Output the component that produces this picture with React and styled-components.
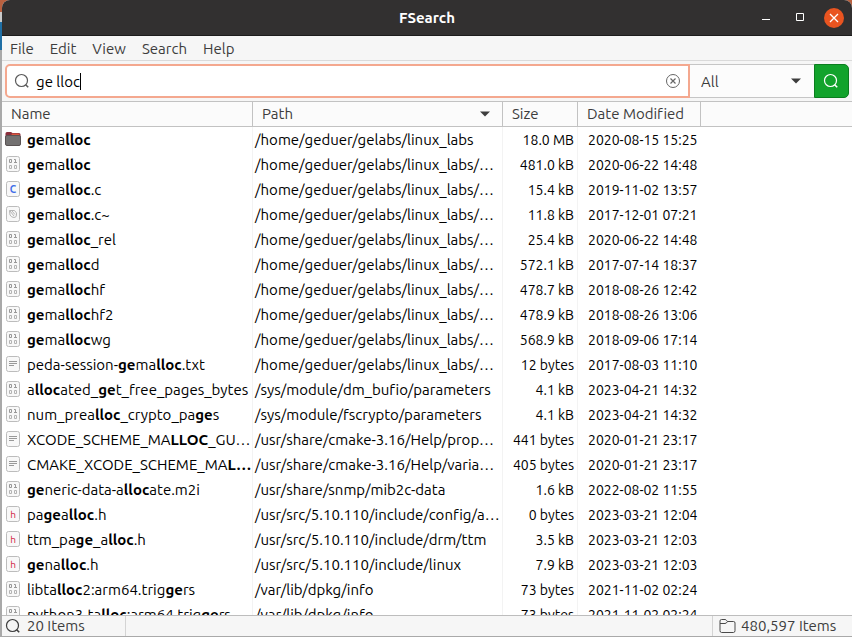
import React, { useState } from "react";
import styled, { createGlobalStyle } from "styled-components";

const GlobalStyle = createGlobalStyle`
  * {
    box-sizing: border-box;
  }
  body {
    margin: 0;
    color: #3d3d3d;
    font-family: Ubuntu, "Noto Sans", sans-serif;
    font-size: 15px;
    font-variant-ligatures: none;
  }
  button, input, select {
    font: inherit;
    color: inherit;
  }
`;

const Desktop = styled.div`
  height: 100vh;
  padding: 0 0 1px 2px;
  background: linear-gradient(
    #b9603f 0 12px,
    #c9c9c9 12px 22px,
    #1f6fa5 22px 50px,
    #a9a9a9 50px
  );
`;

const Window = styled.div`
  height: 100%;
  display: flex;
  flex-direction: column;
  overflow: hidden;
  border-radius: 8px 8px 0 0;
  background: #f6f6f6;
`;

const TitleBar = styled.header`
  display: grid;
  grid-template-columns: 1fr auto 1fr;
  align-items: center;
  flex: none;
  height: 36px;
  padding: 0 8px;
  background: #323030;
  border-bottom: 1px solid #1d1c1c;
  color: #fff;
`;

const Title = styled.h1`
  grid-column: 2;
  margin: 0;
  font-size: 15px;
  font-weight: 700;
`;

const WindowButtons = styled.div`
  display: flex;
  justify-content: flex-end;
  gap: 14px;
`;

const WindowButton = styled.button`
  width: 20px;
  height: 20px;
  padding: 0;
  border: 0;
  border-radius: 50%;
  background: ${(props) => (props.$close ? "#e95420" : "transparent")};
  color: #fff;

  svg {
    display: block;
  }
`;

const MenuBar = styled.nav`
  display: flex;
  align-items: center;
  flex: none;
  gap: 16px;
  height: 25px;
  padding: 2px 8px 0;
  border-bottom: 1px solid #dadada;
`;

const MenuItem = styled.button`
  padding: 0;
  border: 0;
  background: none;
  line-height: 20px;
`;

const SearchBar = styled.form`
  display: flex;
  flex: none;
  height: 40px;
  padding: 3px;
`;

const SearchField = styled.label`
  display: flex;
  align-items: center;
  flex: 1;
  min-width: 0;
  padding: 0 7px;
  background: #fff;
  border: 2px solid #f4a88f;
  border-radius: 5px 0 0 5px;
  color: #000;
`;

const SearchInput = styled.input`
  field-sizing: content;
  height: 20px;
  margin-left: 6px;
  padding: 0;
  border: 0;
  outline: 0;
  background: none;
  caret-color: transparent;
  line-height: 18px;
`;

const Cursor = styled.span`
  width: 1px;
  height: 17px;
  background: #000;
`;

const ClearButton = styled.button`
  margin-left: auto;
  padding: 0;
  border: 0;
  background: none;

  svg {
    display: block;
  }
`;

const Filter = styled.div`
  display: grid;
  align-items: center;
  width: 124px;
  background: #fcfcfc;
  border: solid #c6c6c6;
  border-width: 1px 0;

  > * {
    grid-area: 1 / 1;
  }

  svg {
    justify-self: end;
    margin-right: 13px;
    pointer-events: none;
  }
`;

const FilterSelect = styled.select`
  appearance: none;
  width: 100%;
  height: 100%;
  padding: 0 11px;
  border: 0;
  outline: 0;
  background: none;
`;

const SearchButton = styled.button`
  display: flex;
  align-items: center;
  width: 35px;
  padding: 0 8px;
  background: #12a32c;
  border: 1px solid #0b7d1f;
  border-radius: 0 5px 5px 0;
  color: #fff;
`;

const Results = styled.main`
  flex: 1;
  min-height: 0;
  overflow: hidden;
  background: #fff;
  border-top: 1px solid #c2c2c2;
`;

const Table = styled.table`
  width: 100%;
  table-layout: fixed;
  border-collapse: separate;
  border-spacing: 0;
`;

const Col = styled.col`
  width: ${(props) => props.$width};
`;

const HeadCell = styled.th`
  height: 25px;
  padding: 0 9px;
  background: #fbfbfb;
  border-bottom: 1px solid #c2c2c2;
  border-right: 1px solid #c2c2c2;
  font-weight: 400;
  line-height: 20px;
  text-align: left;

  &:last-child {
    border-right: 0;
  }
`;

const HeadLabel = styled.div`
  display: flex;
  align-items: center;
  justify-content: space-between;
  padding-right: 3px;
`;

const Cell = styled.td`
  height: 25px;
  padding: 0 ${(props) => props.$right || "2px"} 0 ${(props) => props.$left || "2px"};
  overflow: hidden;
  border-right: 1px solid #f3f3f3;
  color: #000;
  font-size: ${(props) => (props.$small ? "14px" : "15px")};
  line-height: 20px;
  text-align: ${(props) => props.$align || "left"};
  white-space: nowrap;

  &:nth-last-child(-n + 2) {
    border-right: 0;
  }
`;

const FileName = styled.div`
  display: flex;
  align-items: center;
  gap: 6px;

  svg {
    flex: none;
    margin-bottom: 2px;
  }
`;

const Match = styled.b`
  font-weight: 700;
`;

const StatusBar = styled.footer`
  display: flex;
  justify-content: space-between;
  flex: none;
  height: 21px;
  border-top: 1px solid #bdbdbd;
`;

const Status = styled.div`
  display: flex;
  align-items: center;
  gap: ${(props) => (props.$right ? "5px" : "6px")};
  width: ${(props) => (props.$right ? "140px" : "124px")};
  padding-left: ${(props) => (props.$right ? "6px" : "3px")};
  border: solid #d4d4d4;
  border-width: ${(props) => (props.$right ? "0 0 0 1px" : "0 1px 0 0")};
  line-height: 20px;
`;

const SearchIcon = ({ color = "#5a5a5a" }) => (
  <svg width="16" height="16" viewBox="0 0 16 16" fill="none" stroke={color}>
    <circle cx="7.5" cy="7.5" r="6" strokeWidth="1.2" />
    <path d="M11.7 11.7 14.2 14.2" strokeWidth="1.6" />
  </svg>
);

const ClearIcon = () => (
  <svg width="16" height="16" viewBox="0 0 16 16" fill="none" stroke="#666">
    <circle cx="8" cy="8" r="6.5" />
    <path d="M5.5 5.5 10.5 10.5M10.5 5.5 5.5 10.5" strokeWidth="1.2" />
  </svg>
);

const ArrowIcon = () => (
  <svg width="10" height="6" viewBox="0 0 10 6" fill="#3d3d3d">
    <path d="M0 .5H10L5 5.5Z" />
  </svg>
);

const FolderOutlineIcon = () => (
  <svg width="17" height="16" viewBox="0 0 17 16" fill="none" stroke="#4a4a4a">
    <path d="M1 12.5V3Q1 1.5 2.5 1.5H6Q7 1.5 7.5 2.5T9 3.5H14.5Q16 3.5 16 5V12.5Q16 14.5 14.5 14.5H2.5Q1 14.5 1 12.5Z" />
    <path d="M1 5.5H6Q7.5 5.5 8.5 3.5" />
  </svg>
);

const glyphs = {
  binary: (
    <g fill="none" stroke="#999">
      <path d="M4.5 3.5h2v3h-2zM9 3.5h1.500v3M9 6.5h3" />
      <path d="M4.5 9.5h2v3h-2zM9.5 9.5h2v3h-2z" stroke="#b4b4b4" />
    </g>
  ),
  c: (
    <text x="8" y="12" textAnchor="middle" fontSize="10" fontWeight="700" fill="#3f6ee8">
      C
    </text>
  ),
  h: (
    <text x="8" y="12" textAnchor="middle" fontSize="10" fill="#d01c3c">
      h
    </text>
  ),
  text: <path d="M4 5.5H12M4 7.5H12M4 9.5H9" stroke="#999" />,
  backup: (
    <g fill="none" stroke="#b5b5b5">
      <path d="M4.5 4.5H9.5L11.5 7V9Q11.500 11.5 9 11.5T5 9Z" />
      <path d="M5 5 9 10M7 5 10 8.5" />
    </g>
  ),
};

const FileIcon = ({ type }) => {
  if (type === "folder") {
    return (
      <svg width="16" height="16" viewBox="0 0 16 16">
        <path d="M.5 12V2.5Q.5 1 2 1H6L7.5 2H14Q15.5 2 15.5 3.5V12Z" fill="#8c2f3c" />
        <path d="M7 2.5H13.5Q14.500 2.5 14.5 4V5H6Z" fill="#d8573f" />
        <rect x=".5" y="4.5" width="15" height="10" rx="1.5" fill="#737171" stroke="#5a5353" />
      </svg>
    );
  }
  return (
    <svg width="16" height="16" viewBox="0 0 16 16">
      <rect x="1.5" y=".5" width="13" height="15" rx="2" fill="#f8f8f8" stroke="#bcbcbc" />
      {glyphs[type]}
    </svg>
  );
};

// parts of a name between asterisks are the matched ones
const files = [
  ["folder", "*ge*ma*lloc*", "/home/geduer/gelabs/linux_labs", "18.0 MB", "2020-08-15 15:25"],
  ["binary", "*ge*ma*lloc*", "/home/geduer/gelabs/linux_labs/…", "481.0 kB", "2020-06-22 14:48"],
  ["c", "*ge*ma*lloc*.c", "/home/geduer/gelabs/linux_labs/…", "15.4 kB", "2019-11-02 13:57"],
  ["backup", "*ge*ma*lloc*.c~", "/home/geduer/gelabs/linux_labs/…", "11.8 kB", "2017-12-01 07:21"],
  ["binary", "*ge*ma*lloc*_rel", "/home/geduer/gelabs/linux_labs/…", "25.4 kB", "2020-06-22 14:48"],
  ["binary", "*ge*ma*lloc*d", "/home/geduer/gelabs/linux_labs/…", "572.1 kB", "2017-07-14 18:37"],
  ["binary", "*ge*ma*lloc*hf", "/home/geduer/gelabs/linux_labs/…", "478.7 kB", "2018-08-26 12:42"],
  ["binary", "*ge*ma*lloc*hf2", "/home/geduer/gelabs/linux_labs/…", "478.9 kB", "2018-08-26 13:06"],
  ["binary", "*ge*ma*lloc*wg", "/home/geduer/gelabs/linux_labs/…", "568.9 kB", "2018-09-06 17:14"],
  ["text", "peda-session-*ge*ma*lloc*.txt", "/home/geduer/gelabs/linux_labs/…", "12 bytes", "2017-08-03 11:10"],
  ["binary", "a*lloc*ated_*ge*t_free_pages_bytes", "/sys/module/dm_bufio/parameters", "4.1 kB", "2023-04-21 14:32"],
  ["binary", "num_prea*lloc*_crypto_pa*ge*s", "/sys/module/fscrypto/parameters", "4.1 kB", "2023-04-21 14:32"],
  ["text", "XCODE_SCHEME_MA*LLOC*_GU…", "/usr/share/cmake-3.16/Help/prop…", "441 bytes", "2020-01-21 23:17"],
  ["text", "CMAKE_XCODE_SCHEME_MA*L…*", "/usr/share/cmake-3.16/Help/varia…", "405 bytes", "2020-01-21 23:17"],
  ["binary", "*ge*neric-data-a*lloc*ate.m2i", "/usr/share/snmp/mib2c-data", "1.6 kB", "2022-08-02 11:55"],
  ["h", "pa*ge*a*lloc*.h", "/usr/src/5.10.110/include/config/a…", "0 bytes", "2023-03-21 12:04"],
  ["h", "ttm_pa*ge*_a*lloc*.h", "/usr/src/5.10.110/include/drm/ttm", "3.5 kB", "2023-03-21 12:03"],
  ["h", "*ge*na*lloc*.h", "/usr/src/5.10.110/include/linux", "7.9 kB", "2023-03-21 12:03"],
  ["binary", "libta*lloc*2:arm64.trig*ge*rs", "/var/lib/dpkg/info", "73 bytes", "2021-11-02 02:24"],
  ["binary", "python3-ta*lloc*:arm64.trig*ge*rs", "/var/lib/dpkg/info", "73 bytes", "2021-11-02 02:24"],
];

const Highlighted = ({ name }) => (
  <span>
    {name.split("*").map((part, i) => (i % 2 ? <Match key={i}>{part}</Match> : part))}
  </span>
);

const App = () => {
  const [query, setQuery] = useState("ge lloc");

  return (
    <Desktop>
      <GlobalStyle />
      <Window>
        <TitleBar>
          <Title>FSearch</Title>
          <WindowButtons>
            <WindowButton aria-label="Minimize">
              <svg width="20" height="20" stroke="currentColor">
                <path d="M6 11.5H14" />
              </svg>
            </WindowButton>
            <WindowButton aria-label="Maximize">
              <svg width="20" height="20" fill="none" stroke="currentColor">
                <path d="M6.5 5.5H13.5V12.5H6.5Z" />
              </svg>
            </WindowButton>
            <WindowButton $close aria-label="Close">
              <svg width="20" height="20" stroke="currentColor" strokeWidth="1.3">
                <path d="M6 6 14 14M14 6 6 14" />
              </svg>
            </WindowButton>
          </WindowButtons>
        </TitleBar>

        <MenuBar>
          <MenuItem>File</MenuItem>
          <MenuItem>Edit</MenuItem>
          <MenuItem>View</MenuItem>
          <MenuItem>Search</MenuItem>
          <MenuItem>Help</MenuItem>
        </MenuBar>

        <SearchBar onSubmit={(e) => e.preventDefault()}>
          <SearchField>
            <SearchIcon />
            <SearchInput
              aria-label="Search"
              value={query}
              onChange={(e) => setQuery(e.target.value)}
            />
            <Cursor />
            <ClearButton type="button" aria-label="Clear" onClick={() => setQuery("")}>
              <ClearIcon />
            </ClearButton>
          </SearchField>
          <Filter>
            <FilterSelect aria-label="Filter">
              <option>All</option>
            </FilterSelect>
            <ArrowIcon />
          </Filter>
          <SearchButton aria-label="Start search">
            <SearchIcon color="#fff" />
          </SearchButton>
        </SearchBar>

        <Results>
          <Table>
            <colgroup>
              <Col $width="251px" />
              <Col $width="250px" />
              <Col $width="75px" />
              <Col $width="123px" />
              <Col $width="auto" />
            </colgroup>
            <thead>
              <tr>
                <HeadCell>Name</HeadCell>
                <HeadCell>
                  <HeadLabel>
                    Path <ArrowIcon />
                  </HeadLabel>
                </HeadCell>
                <HeadCell>Size</HeadCell>
                <HeadCell>Date Modified</HeadCell>
                <HeadCell />
              </tr>
            </thead>
            <tbody>
              {files.map(([type, name, path, size, date], i) => (
                <tr key={i}>
                  <Cell $left="3px">
                    <FileName>
                      <FileIcon type={type} />
                      <Highlighted name={name} />
                    </FileName>
                  </Cell>
                  <Cell>{path}</Cell>
                  <Cell $small $align="right" $right="3px">{size}</Cell>
                  <Cell $small $left="10px" $right="0">{date}</Cell>
                  <Cell />
                </tr>
              ))}
            </tbody>
          </Table>
        </Results>

        <StatusBar>
          <Status>
            <SearchIcon color="#3d3d3d" />
            20 Items
          </Status>
          <Status $right>
            <FolderOutlineIcon />
            480,597 Items
          </Status>
        </StatusBar>
      </Window>
    </Desktop>
  );
};

export default App;
